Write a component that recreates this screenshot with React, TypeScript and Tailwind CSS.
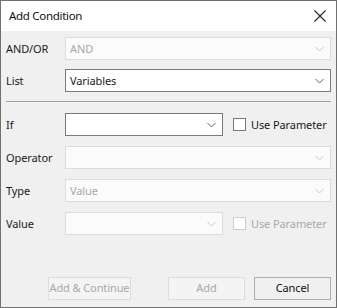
import React from "react";

const font = { fontFamily: '"Noto Sans", "Open Sans", sans-serif' };

function Chevron({ disabled }: { disabled?: boolean }) {
  return (
    <svg width="9" height="6" viewBox="0 0 9 6" className="shrink-0">
      <path d="M0.5 1 L4.5 5 L8.5 1" fill="none" stroke={disabled ? "#c8c8c8" : "#606060"} strokeWidth="1" />
    </svg>
  );
}

function Combo({ value, disabled, w }: { value?: string; disabled?: boolean; w: string }) {
  return (
    <div
      className={`${w} h-[23px] flex items-center justify-between pl-[4px] pr-[6px] border ${
        disabled ? "border-[#dcdcdc] bg-[#fbfbfb] text-[#a8a8a8]" : "border-[#7a7a7a] bg-white text-[#1a1a1a]"
      }`}
    >
      <span className="text-[11px] tracking-[-0.1px] leading-none whitespace-nowrap">{value ?? ""}</span>
      <Chevron disabled={disabled} />
    </div>
  );
}

function Check({ disabled }: { disabled?: boolean }) {
  return (
    <div className="flex items-center ml-[10px]">
      <div className={`shrink-0 w-[13px] h-[13px] border bg-white ${disabled ? "border-[#cccccc]" : "border-[#7a7a7a]"}`} />
      <span
        className={`ml-[5px] text-[11px] tracking-[-0.1px] leading-none whitespace-nowrap ${
          disabled ? "text-[#a8a8a8]" : "text-[#1a1a1a]"
        }`}
      >
        Use Parameter
      </span>
    </div>
  );
}

function Row({ label, children, mt }: { label: string; children: React.ReactNode; mt: string }) {
  return (
    <div className={`flex items-center ${mt}`}>
      <div className="w-[59px] shrink-0 text-[11px] tracking-[-0.1px] text-[#1a1a1a] leading-none whitespace-nowrap">
        {label}
      </div>
      {children}
    </div>
  );
}

export default function App() {
  return (
    <div style={font} className="w-[337px] h-[308px] border border-[#707070] bg-[#f0f0f0] flex flex-col">
      <div className="h-[30px] bg-white flex items-center justify-between pl-[8px] pr-[8px] shrink-0">
        <span className="text-[11.5px] tracking-[-0.3px] text-[#111] whitespace-nowrap">Add Condition</span>
        <svg width="12" height="12" viewBox="0 0 12 12" className="mr-[2px]">
          <path d="M0.5 0.5 L11.5 11.5 M11.5 0.5 L0.5 11.5" stroke="#222" strokeWidth="1.1" />
        </svg>
      </div>
      <div className="flex flex-col pl-[5px] pr-[5px]">
        <Row label="AND/OR" mt="mt-[6px]">
          <Combo value="AND" disabled w="w-[266px]" />
        </Row>
        <Row label="List" mt="mt-[9px]">
          <Combo value="Variables" w="w-[266px]" />
        </Row>
        <div className="mt-[9px] h-px bg-[#a0a0a0]" />
        <Row label="If" mt="mt-[11px]">
          <Combo w="w-[158px]" />
          <Check />
        </Row>
        <Row label="Operator" mt="mt-[10px]">
          <Combo disabled w="w-[266px]" />
        </Row>
        <Row label="Type" mt="mt-[10px]">
          <Combo value="Value" disabled w="w-[266px]" />
        </Row>
        <Row label="Value" mt="mt-[10px]">
          <Combo disabled w="w-[158px]" />
          <Check disabled />
        </Row>
        <div className="flex justify-end mt-[42px]">
          <button className="w-[83px] h-[23px] px-0 whitespace-nowrap border border-[#dcdcdc] bg-[#f4f4f4] text-[11px] tracking-[-0.1px] text-[#a8a8a8]">
            Add &amp; Continue
          </button>
          <button className="ml-[37px] w-[77px] h-[23px] whitespace-nowrap border border-[#dcdcdc] bg-[#f4f4f4] text-[11px] tracking-[-0.1px] text-[#a8a8a8]">
            Add
          </button>
          <button className="ml-[9px] w-[77px] h-[23px] whitespace-nowrap border border-[#adadad] bg-[#f0f0f0] text-[11px] tracking-[-0.1px] text-[#111]">
            Cancel
          </button>
        </div>
      </div>
    </div>
  );
}
